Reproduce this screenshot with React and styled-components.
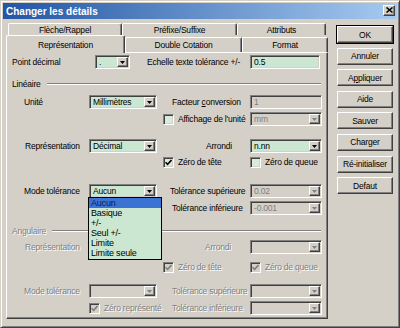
import React from "react";
import styled, { createGlobalStyle, css } from "styled-components";

const GlobalStyle = createGlobalStyle`
  html, body {
    margin: 0;
    padding: 0;
    background: #d4d0c8;
  }
  body {
    font-family: "Liberation Sans", Arial, sans-serif;
    font-size: 8.5px;
    letter-spacing: -0.2px;
    color: #000;
  }
`;

const FIELD = "#cbe7d1";
const FACE = "#d4d0c8";

const raised = css`
  border: 1px solid;
  border-color: #fff #404040 #404040 #fff;
  box-shadow: inset -1px -1px #808080;
`;

const sunken = css`
  border: 1px solid;
  border-color: #808080 #fff #fff #808080;
  box-shadow: inset 1px 1px #404040, inset -1px -1px ${FACE};
`;

const Window = styled.div`
  width: 400px;
  height: 328px;
  box-sizing: border-box;
  background: ${FACE};
  border: 1px solid;
  border-color: ${FACE} #404040 #404040 ${FACE};
  box-shadow: inset 1px 1px #fff, inset -1px -1px #808080;
  padding: 2px;
  display: flex;
  flex-direction: column;
`;

const TitleBar = styled.div`
  height: 16px;
  background: linear-gradient(to right, #2256a4, #a6caf0);
  display: flex;
  align-items: center;
  justify-content: space-between;
  padding: 0 2px 0 3px;
`;

const TitleText = styled.span`
  color: #fff;
  font-weight: bold;
  font-size: 10px;
  letter-spacing: 0;
`;

const CloseBtn = styled.div`
  ${raised};
  width: 10px;
  height: 9px;
  background: ${FACE};
  display: flex;
  align-items: center;
  justify-content: center;
  margin-top: -2px;
`;

const Body = styled.div`
  display: flex;
  padding: 4px 0 0 3px;
`;

const TabControl = styled.div`
  width: 322px;
  display: flex;
  flex-direction: column;
`;

const TabRow = styled.div`
  display: flex;
  align-items: flex-end;
  height: ${(p) => p.$h}px;
  margin-left: ${(p) => p.$ml || 0}px;
`;

const Tab = styled.div`
  width: ${(p) => p.$w}px;
  height: ${(p) => p.$h}px;
  box-sizing: border-box;
  border-top: 1px solid #fff;
  border-left: 1px solid #fff;
  border-right: 1px solid #404040;
  box-shadow: inset -1px 0 #808080;
  border-radius: 2px 2px 0 0;
  background: ${FACE};
  display: flex;
  align-items: center;
  justify-content: center;
  position: relative;
  ${(p) =>
    p.$active &&
    css`
      z-index: 2;
      margin-bottom: -1px;
    `}
`;

const Panel = styled.div`
  height: 267px;
  box-sizing: border-box;
  border: 1px solid;
  border-color: #fff #404040 #404040 #fff;
  box-shadow: inset -1px -1px #808080;
  padding: 0 6px 0 5px;
  display: flex;
  flex-direction: column;
`;

const Row = styled.div`
  display: flex;
  align-items: center;
  height: ${(p) => p.$h || 14}px;
  margin-top: ${(p) => p.$mt || 0}px;
`;

const Spacer = styled.div`
  width: ${(p) => p.$w}px;
  flex-shrink: 0;
`;

const Label = styled.span`
  width: ${(p) => p.$w}px;
  margin-left: ${(p) => p.$ml || 0}px;
  padding-left: ${(p) => p.$pl || 0}px;
  box-sizing: border-box;
  flex-shrink: 0;
  white-space: nowrap;
  color: ${(p) => (p.$dis ? "#808080" : "#000")};
  text-shadow: ${(p) => (p.$dis ? "1px 1px 0 #fff" : "none")};
`;

const Field = styled.div`
  ${sunken};
  position: relative;
  width: ${(p) => p.$w}px;
  height: 14px;
  box-sizing: border-box;
  flex-shrink: 0;
  background: ${(p) => (p.$dis ? FACE : FIELD)};
  color: ${(p) => (p.$dis ? "#808080" : "#000")};
  display: flex;
  align-items: center;
`;

const FieldText = styled.span`
  flex: 1;
  padding-left: 3px;
  white-space: nowrap;
  overflow: hidden;
`;

const ArrowBtn = styled.div`
  ${raised};
  width: 9px;
  height: 8px;
  margin: 1px;
  background: ${FACE};
  display: flex;
  align-items: center;
  justify-content: center;
`;

const Popup = styled.div`
  position: absolute;
  left: -2px;
  top: 100%;
  width: 72px;
  border: 1px solid #000;
  background: ${FIELD};
  z-index: 5;
  padding-bottom: 1px;
  font-size: 9px;
`;

const PopupItem = styled.div`
  height: 10px;
  line-height: 10px;
  padding-left: 2px;
  background: ${(p) => (p.$sel ? "#3b73d4" : "transparent")};
  color: ${(p) => (p.$sel ? "#0a1a5a" : "#000")};
`;

const CheckWrap = styled.div`
  width: ${(p) => p.$w}px;
  flex-shrink: 0;
  display: flex;
  align-items: center;
  gap: 4px;
  white-space: nowrap;
  color: ${(p) => (p.$dis ? "#808080" : "#000")};
  text-shadow: ${(p) => (p.$dis ? "1px 1px 0 #fff" : "none")};
`;

const CheckBox = styled.div`
  ${sunken};
  width: 11px;
  height: 11px;
  box-sizing: border-box;
  flex-shrink: 0;
  background: ${(p) => (p.$dis ? FACE : "#d9ecdc")};
  display: flex;
  align-items: center;
  justify-content: center;
`;

const GroupHead = styled.div`
  display: flex;
  align-items: center;
  height: 10px;
  margin-top: ${(p) => p.$mt}px;
  color: ${(p) => (p.$dis ? "#808080" : "#000")};
  text-shadow: ${(p) => (p.$dis ? "1px 1px 0 #fff" : "none")};
`;

const GroupLine = styled.div`
  flex: 1;
  margin-left: 6px;
  border-top: 1px solid #808080;
  border-bottom: 1px solid #fff;
`;

const ButtonCol = styled.div`
  width: 56px;
  margin-left: 9px;
  padding-top: 3px;
  display: flex;
  flex-direction: column;
  gap: 4.6px;
`;

const Button = styled.div`
  ${raised};
  height: 17px;
  box-sizing: border-box;
  background: ${FACE};
  display: flex;
  align-items: center;
  justify-content: center;
  ${(p) =>
    p.$default &&
    css`
      outline: 1px solid #000;
    `}
`;

const Arrow = ({ dis }) => (
  <svg width="5" height="3" viewBox="0 0 5 3">
    <path d="M0 0h5L2.5 3z" fill={dis ? "#808080" : "#000"} />
  </svg>
);

const Combo = ({ w, value, dis, children }) => (
  <Field $w={w} $dis={dis}>
    <FieldText>{value}</FieldText>
    <ArrowBtn>
      <Arrow dis={dis} />
    </ArrowBtn>
    {children}
  </Field>
);

const Input = ({ w, value, dis }) => (
  <Field $w={w} $dis={dis}>
    <FieldText>{value}</FieldText>
  </Field>
);

const Check = ({ w, label, checked, dis }) => (
  <CheckWrap $w={w} $dis={dis}>
    <CheckBox $dis={dis}>
      {checked && (
        <svg width="7" height="7" viewBox="0 0 7 7">
          <path
            d="M0.5 3.2 L2.6 5.4 L6.5 1"
            stroke={dis ? "#808080" : "#000"}
            strokeWidth="1.6"
            fill="none"
          />
        </svg>
      )}
    </CheckBox>
    <span>{label}</span>
  </CheckWrap>
);

const tolModes = ["Aucun", "Basique", "+/-", "Seul +/-", "Limite", "Limite seule"];

const App = () => {
  return (
    <>
      <GlobalStyle />
      <Window>
        <TitleBar>
          <TitleText>Changer les détails</TitleText>
          <CloseBtn>
            <svg width="7" height="6" viewBox="0 0 7 6">
              <path d="M0.5 0.5 L6.5 5.5 M6.5 0.5 L0.5 5.5" stroke="#000" strokeWidth="1.5" />
            </svg>
          </CloseBtn>
        </TitleBar>
        <Body>
          <TabControl>
            <TabRow $h={12} $ml={2}>
              <Tab $w={114} $h={12}>Flèche/Rappel</Tab>
              <Tab $w={115} $h={12}>Préfixe/Suffixe</Tab>
              <Tab $w={89} $h={12}>Attributs</Tab>
            </TabRow>
            <TabRow $h={17}>
              <Tab $w={119} $h={18} $active>Représentation</Tab>
              <Tab $w={117} $h={15}>Double Cotation</Tab>
              <Tab $w={86} $h={15}>Format</Tab>
            </TabRow>
            <Panel>
              <Row $mt={2}>
                <Label $w={83}>Point décimal</Label>
                <Combo w={35} value="." />
                <Label $ml={17} $w={103}>Echelle texte tolérance +/-</Label>
                <Input w={70} value="0.5" />
              </Row>

              <GroupHead $mt={10}>
                Linéaire
                <GroupLine />
              </GroupHead>

              <Row $mt={6}>
                <Label $pl={12} $w={77}>Unité</Label>
                <Combo w={68} value="Millimètres" />
                <Label $ml={15} $w={78}>
                  Facteur <u>c</u>onversion
                </Label>
                <Input w={72} value="1" dis />
              </Row>
              <Row $mt={3}>
                <Spacer $w={151} />
                <Check w={87} label="Affichage de l'unité" />
                <Combo w={72} value="mm" dis />
              </Row>

              <Row $mt={13}>
                <Label $pl={13} $w={77}>Représentation</Label>
                <Combo w={68} value="Décimal" />
                <Label $ml={49} $w={44}>Arrondi</Label>
                <Combo w={72} value="n.nn" />
              </Row>
              <Row $mt={3} $h={12}>
                <Spacer $w={151} />
                <Check w={87} label="Zéro de tête" checked />
                <Check w={72} label="Zéro de queue" />
              </Row>

              <Row $mt={16}>
                <Label $pl={12} $w={77}>Mode tolérance</Label>
                <Combo w={68} value="Aucun">
                  <Popup>
                    {tolModes.map((m, i) => (
                      <PopupItem key={m} $sel={i === 0}>
                        {m}
                      </PopupItem>
                    ))}
                  </Popup>
                </Combo>
                <Label $ml={13} $w={80}>Tolérance supérieure</Label>
                <Combo w={72} value="0.02" dis />
              </Row>
              <Row $mt={3}>
                <Spacer $w={160} />
                <Label $w={78}>Tolérance inférieure</Label>
                <Combo w={72} value="-0.001" dis />
              </Row>

              <GroupHead $mt={11} $dis>
                Angulaire
                <GroupLine />
              </GroupHead>

              <Row $mt={4}>
                <Label $pl={13} $w={77} $dis>Représentation</Label>
                <Combo w={68} value="" dis />
                <Label $ml={48} $w={45} $dis>Arrondi</Label>
                <Combo w={72} value="" dis />
              </Row>
              <Row $mt={7} $h={12}>
                <Spacer $w={151} />
                <Check w={87} label="Zéro de tête" checked dis />
                <Check w={72} label="Zéro de queue" checked dis />
              </Row>

              <Row $mt={11}>
                <Label $pl={12} $w={77} $dis>Mode tolérance</Label>
                <Combo w={68} value="" dis />
                <Label $ml={15} $w={78} $dis>Tolérance supérieure</Label>
                <Combo w={72} value="" dis />
              </Row>
              <Row $mt={3}>
                <Spacer $w={77} />
                <Check w={83} label="Zéro représenté" checked dis />
                <Label $w={78} $dis>Tolérance inférieure</Label>
                <Combo w={72} value="" dis />
              </Row>
            </Panel>
          </TabControl>
          <ButtonCol>
            <Button $default>OK</Button>
            <Button>Annuler</Button>
            <Button>
              A<u>p</u>pliquer
            </Button>
            <Button>Aide</Button>
            <Button>Sauver</Button>
            <Button>Charger</Button>
            <Button>Ré-initialiser</Button>
            <Button>Defaut</Button>
          </ButtonCol>
        </Body>
      </Window>
    </>
  );
};

export default App;
